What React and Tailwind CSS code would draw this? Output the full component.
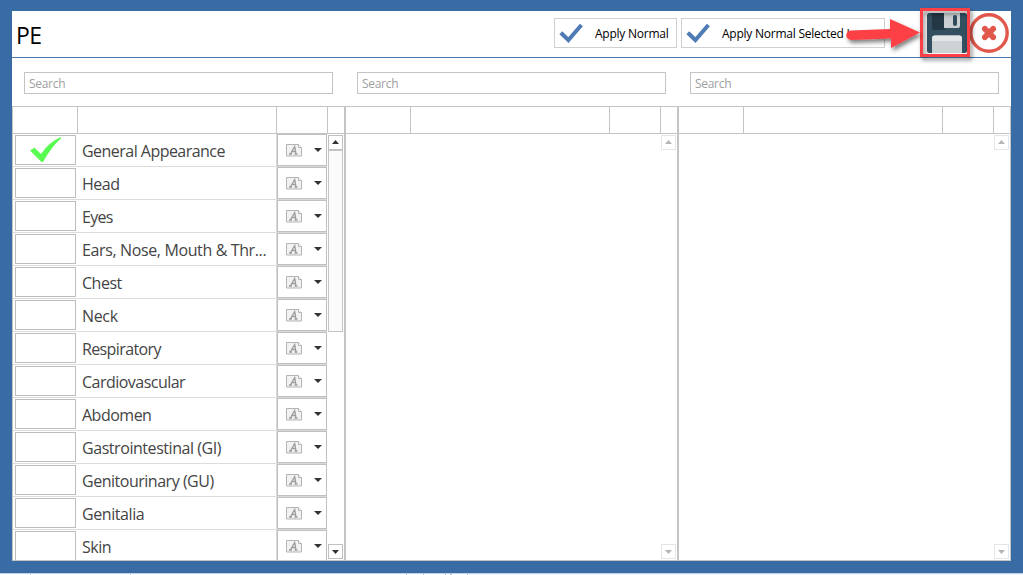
import React from "react";

const rows = [
  ["General Appearance", "tracking-[-0.53px]"],
  ["Head", "tracking-[-0.5px]"],
  ["Eyes", "tracking-[-0.7px]"],
  ["Ears, Nose, Mouth & Thr...", "tracking-[-0.37px]"],
  ["Chest", "tracking-[-0.5px]"],
  ["Neck", "tracking-[-0.35px]"],
  ["Respiratory", "tracking-[-0.62px]"],
  ["Cardiovascular", "tracking-[-0.52px]"],
  ["Abdomen", "tracking-[-0.5px]"],
  ["Gastrointestinal (GI)", "tracking-[-0.44px]"],
  ["Genitourinary (GU)", "tracking-[-0.48px]"],
  ["Genitalia", "tracking-[-0.42px]"],
  ["Skin", "tracking-[-0.45px]"],
];

function ApplyButton({ label, className }) {
  return (
    <button className={"flex h-[30px] items-center border border-[#d0d0d0] bg-white text-left text-[12px] text-black " + className}>
      <svg className="ml-[4px] mr-[12px] h-[20px] w-[24px] shrink-0" viewBox="0 0 24 20">
        <path d="M1.8 9.8 L9.4 17 L22.4 2" fill="none" stroke="#4f7cb4" strokeWidth="4" />
      </svg>
      <span className="pt-[2px] whitespace-nowrap tracking-[-0.24px]">{label}</span>
    </button>
  );
}

function ScrollArrow({ down, active }) {
  return (
    <div className={"flex size-[15px] shrink-0 items-center justify-center border bg-white " + (active ? "border-[#c0c0c0]" : "border-[#e6e6e6]")}>
      <svg className={"h-[4px] w-[7px] " + (down ? "" : "mb-px")} viewBox="0 0 7 4">
        <path d={down ? "M0 0H7L3.5 4Z" : "M0 4H7L3.5 0Z"} fill={active ? "#333" : "#b4b4b4"} />
      </svg>
    </div>
  );
}

function NoteIcon() {
  return (
    <svg className="h-[13px] w-[17px]" viewBox="0 0 17 13">
      <path d="M.5 .5H12.5L15.5 3.5V12H.5Z" fill="#f2f2f2" stroke="#b4b4b4" />
      <path d="M12.5 .5V3.5H15.5" fill="#fff" stroke="#b4b4b4" />
      <path d="M3 10H6M4.3 10L8.7 2.5L10 10M6 7.5H10M8.5 10H11.5" fill="none" stroke="#9c9c9c" strokeWidth="1.3" />
    </svg>
  );
}

function Row({ label, spacing, checked }) {
  return (
    <div className="flex h-[33px] shrink-0">
      <div className="w-[64px] border-b border-[#dcdcdc] pl-[2px] pt-px">
        <div className="flex h-[30px] w-[61px] justify-center border border-[#bdbdbd] bg-white">
          {checked && (
            <svg className="mt-px h-[26px] w-[32px]" viewBox="0 0 32 26">
              <path d="M0 13.5L4.5 10.8L11 17Q19 5 31 0V1.5Q22 9 13 25H11.5Z" fill="#58fb4f" />
            </svg>
          )}
        </div>
      </div>
      <div className={"w-[199px] border-b border-[#dcdcdc] pl-[5px] pt-[2px] text-[16px] leading-[31px] whitespace-nowrap text-[#444] " + spacing}>{label}</div>
      <div className="h-[33px] w-[51px] bg-[#d9d9d9] pb-px pl-px">
        <div className="flex h-[32px] w-[50px] items-center border border-[#c0c0c0] bg-white pl-[8px]">
          <NoteIcon />
          <svg className="ml-[11px] h-[4px] w-[8px]" viewBox="0 0 8 4">
            <path d="M0 0H8L4 4Z" fill="#333" />
          </svg>
        </div>
      </div>
    </div>
  );
}

function Panel({ children, active }) {
  return (
    <section className="flex h-[503px] w-[333px] shrink-0 flex-col">
      <div className="h-[48px] pl-[12px] pt-[14px]">
        <div className="h-[22px] w-[309px] border border-[#c4c4c4] pl-[4px] text-[12px] leading-[22px] tracking-[-0.3px] text-[#a0a0a0]">Search</div>
      </div>
      <div className="flex min-h-0 flex-1 flex-col border border-[#c4c4c4]">
        <div className="flex h-[27px] shrink-0 border-b border-[#c4c4c4]">
          <div className="w-[65px] border-r border-[#c4c4c4]" />
          <div className="w-[199px] border-r border-[#c4c4c4]" />
          <div className="w-[51px] border-r border-[#c4c4c4]" />
        </div>
        <div className="flex min-h-0 flex-1">
          <div className="flex w-[315px] flex-col overflow-hidden">{children}</div>
          <div className="flex w-[15px] flex-col justify-between pb-px pt-px">
            <div>
              <ScrollArrow active={active} />
              {active && <div className="h-[182px] w-[15px] border border-[#c4c4c4] bg-[#fbfbfb]" />}
            </div>
            <ScrollArrow active={active} down />
          </div>
        </div>
      </div>
    </section>
  );
}

export default function App() {
  return (
    <div className="relative h-[575px] w-[1023px] overflow-hidden bg-white font-['Open_Sans','Noto_Sans',sans-serif]">
      <div className="h-[573px] bg-[#396ba5] pl-[12px] pt-[11px]">
        <main className="h-[550px] w-[999px] bg-white">
          <header className="flex h-[47px] items-start border-b border-[#4a78ae]">
            <h1 className="w-[542px] pl-[4px] pt-[8px] text-[23px] leading-[32px] tracking-[-0.5px] text-black">PE</h1>
            <ApplyButton label="Apply Normal" className="mt-[7px] w-[123px]" />
            <ApplyButton label="Apply Normal Selected I" className="ml-[4px] mt-[7px] w-[204px]" />
          </header>
          <div className="flex">
            <Panel active>
              {rows.map(([label, spacing], i) => (
                <Row key={label} label={label} spacing={spacing} checked={i === 0} />
              ))}
            </Panel>
            <Panel />
            <Panel />
          </div>
        </main>
      </div>
      <div className="h-px bg-[#c3d2e4]" />
      <div className="flex h-px">
        <div className="ml-[30px] w-px bg-[#c4c4c4]" />
        <div className="ml-[99px] w-px bg-[#c4c4c4]" />
        <div className="ml-[275px] w-px bg-[#b5b5b5]" />
        <div className="ml-[16px] w-px bg-[#b5b5b5]" />
        <div className="ml-[21px] w-px bg-[#b5b5b5]" />
        <div className="ml-[4px] w-[2px] bg-[#b5b5b5]" />
        <div className="ml-[15px] w-px bg-[#b5b5b5]" />
        <div className="flex-1 bg-[#f2f6fa]" />
      </div>
      <svg className="absolute left-[840px] top-0 h-[70px] w-[183px]" viewBox="840 0 183 70">
        <defs>
          <filter id="shadow" x="-20%" y="-20%" width="150%" height="160%">
            <feDropShadow dx="2" dy="3" stdDeviation="2" floodOpacity=".5" />
          </filter>
        </defs>
        <rect x="927" y="13" width="40" height="40" rx="2.5" fill="#335061" />
        <path d="M932 13H945V30H934Q932 30 932 28Z" fill="#243744" />
        <path d="M944 13H960V26Q960 28 958 28H944Z" fill="#c9cfd2" />
        <rect x="953" y="15" width="4" height="11" rx="2" fill="#304c5c" />
        <path d="M932 53V38Q932 35.5 935 35.5H959Q962 35.5 962 38V53Z" fill="#cdd2d5" />
        <path d="M932 41V38Q932 35.5 935 35.5H959Q962 35.5 962 38V41Z" fill="#e3e7e8" />
        <circle cx="989" cy="33" r="18.2" fill="white" stroke="#e2574c" strokeWidth="3.4" />
        <path d="M983.8 27.8L994.2 38.2M994.2 27.8L983.8 38.2" stroke="#e2574c" strokeWidth="5.6" />
        <path d="M984.5 28.5L993.5 37.5M993.5 28.5L984.5 37.5" stroke="#e2574c" strokeWidth="5.2" strokeLinecap="round" />
        <rect x="921.5" y="9.5" width="47" height="46" fill="none" stroke="#fc4144" strokeWidth="3" filter="url(#shadow)" />
        <path d="M851 30.5L890 29V19L920 32.5L891 48V38.5L851 40A4.75 4.75 0 0 1 851 30.5Z" fill="#fc4144" filter="url(#shadow)" />
      </svg>
    </div>
  );
}
